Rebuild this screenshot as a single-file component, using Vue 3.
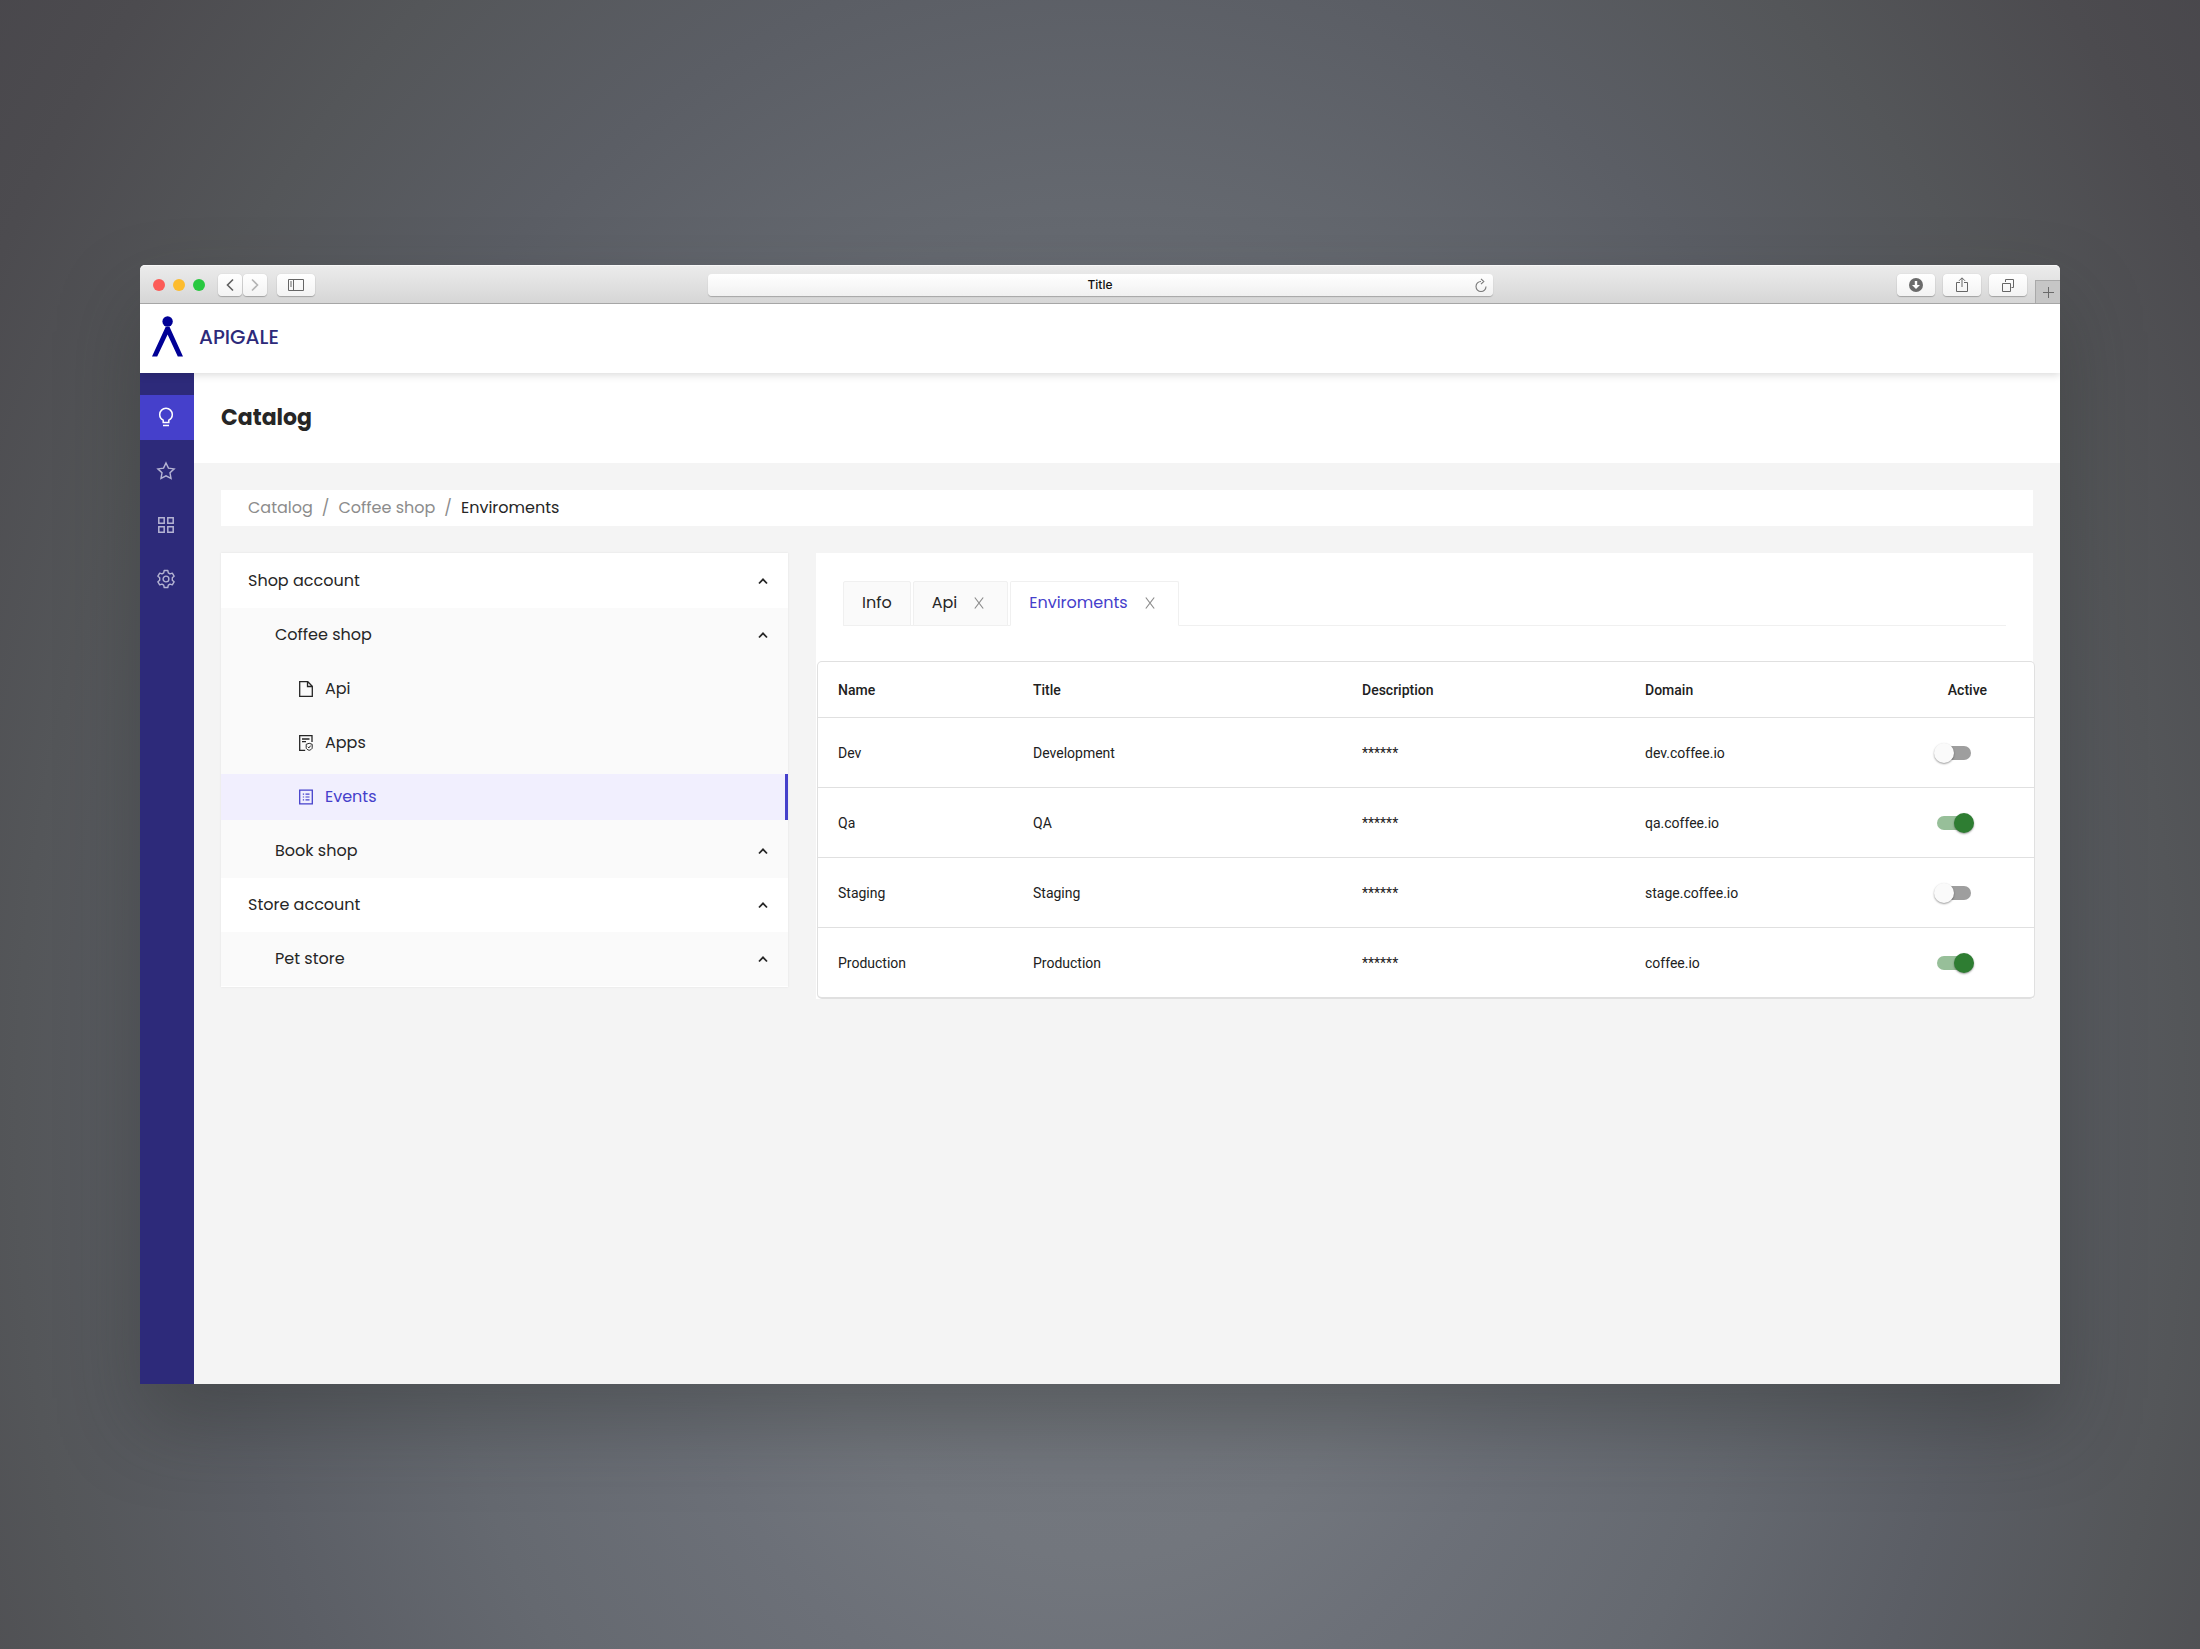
<script setup>
import { reactive, ref } from 'vue'

const rail = ['bulb', 'star', 'grid', 'gear']
const activeRail = ref('bulb')

const menu = [
  { label: 'Shop account', level: 1 },
  { label: 'Coffee shop', level: 2 },
  { label: 'Api', level: 3, icon: 'file' },
  { label: 'Apps', level: 3, icon: 'apps' },
  { label: 'Events', level: 3, icon: 'events' },
  { label: 'Book shop', level: 2 },
  { label: 'Store account', level: 1 },
  { label: 'Pet store', level: 2 },
]
const selected = ref('Events')

const tabs = [
  { label: 'Info', closable: false },
  { label: 'Api', closable: true },
  { label: 'Enviroments', closable: true },
]
const activeTab = ref('Enviroments')

const rows = reactive([
  { name: 'Dev', title: 'Development', domain: 'dev.coffee.io', active: false },
  { name: 'Qa', title: 'QA', domain: 'qa.coffee.io', active: true },
  { name: 'Staging', title: 'Staging', domain: 'stage.coffee.io', active: false },
  { name: 'Production', title: 'Production', domain: 'coffee.io', active: true },
])
const address = ref('Title')
</script>

<template>
  <div class="desktop">
    <div class="window">
      <div class="chrome">
        <div class="chrome-left">
          <div class="lights">
            <i class="light red"></i><i class="light yellow"></i><i class="light green"></i>
          </div>
          <div class="nav-pair">
            <button class="key narrow" aria-label="Back">
              <svg width="10" height="14" viewBox="0 0 10 14"><path d="M8 1.5 2.5 7 8 12.5" stroke="#5f5f5f" stroke-width="1.6" /></svg>
            </button>
            <button class="key narrow" aria-label="Forward">
              <svg width="10" height="14" viewBox="0 0 10 14"><path d="M2 1.5 7.5 7 2 12.5" stroke="#b4b4b4" stroke-width="1.6" /></svg>
            </button>
          </div>
          <button class="key" aria-label="Sidebar">
            <svg width="16" height="12" viewBox="0 0 16 12"><path d="M.5.5h15v11H.5zM5.500.5v11M2 3h2M2 5h2M2 7h2" stroke="#666" /></svg>
          </button>
        </div>
        <div class="address">
          <input v-model="address" type="text" aria-label="Address" />
          <button aria-label="Reload">
            <svg width="12" height="15" viewBox="0 0 12 15"><path d="M6 3.500A5 5 0 1 0 11 8.500M6 .8 8.800 3.500 6 6.200" stroke="#777" stroke-width="1.1" /></svg>
          </button>
        </div>
        <div class="chrome-right">
          <button class="key" aria-label="Downloads">
            <svg width="14" height="14" viewBox="0 0 14 14"><circle cx="7" cy="7" r="7" fill="#6b6b6b" /><path d="M5.800 3h2.400v4H11l-4 4-4-4h2.800z" fill="#fff" /></svg>
          </button>
          <button class="key" aria-label="Share">
            <svg width="12" height="16" viewBox="0 0 12 16"><path d="M4 5.500H.500v9h11v-9H8M6 10V1M3 3.800l3-3 3 3" stroke="#666" /></svg>
          </button>
          <button class="key" aria-label="Tabs">
            <svg width="12" height="13" viewBox="0 0 12 13"><path d="M.5 4.500h8v8h-8zM3.500 3V.5h8v8H9.500" stroke="#666" /></svg>
          </button>
          <button class="new-tab" aria-label="New tab">
            <svg width="11" height="11" viewBox="0 0 11 11"><path d="M5.500 0v11M0 5.500h11" stroke="#6a6a6a" /></svg>
          </button>
        </div>
      </div>

      <header class="brand">
        <svg width="32" height="41" viewBox="0 0 32 41">
          <circle cx="15.600" cy="5.500" r="5.200" fill="#000096" />
          <path d="M13.600 11h4L31 40.500h-5.200L15.600 18.500 5.200 40.500H0z" fill="#000096" />
        </svg>
        <span>APIGALE</span>
      </header>

      <div class="body">
        <nav class="rail">
          <button
            v-for="item in rail"
            :key="item"
            :class="{ on: item === activeRail }"
            :aria-label="item"
            @click="activeRail = item"
          >
            <svg v-if="item === 'bulb'" width="18" height="20" viewBox="0 0 18 20">
              <path d="M6.200 15.500v-2.300C3.800 12 2.700 10 2.700 7.600a6.300 6.300 0 0 1 12.600 0c0 2.400-1.100 4.400-3.500 5.600v2.300zM6 18.600h6" stroke="currentColor" stroke-width="1.500" />
            </svg>
            <svg v-else-if="item === 'star'" width="20" height="20" viewBox="0 0 18 18">
              <path d="m9 1.800 2.200 4.600 5.100.7-3.700 3.500.9 5.100L9 13.300l-4.500 2.400.9-5.100L1.700 7.100l5.100-.7z" stroke="currentColor" stroke-width="1.300" />
            </svg>
            <svg v-else-if="item === 'grid'" width="18" height="18" viewBox="0 0 18 18">
              <path d="M1.800 1.800h5.400v5.400H1.800zM10.800 1.800h5.400v5.400h-5.400zM1.800 10.800h5.400v5.400H1.800zM10.800 10.800h5.400v5.400h-5.400z" stroke="currentColor" stroke-width="1.500" />
            </svg>
            <svg v-else width="18" height="20" viewBox="0 0 18 20">
              <path d="M7.200 1.500h3.600l.5 2.400 1.700 1 2.300-.8 1.800 3.100-1.800 1.600v2.400l1.800 1.600-1.800 3.100-2.300-.8-1.700 1-.5 2.400H7.200l-.5-2.400-1.700-1-2.300.8-1.800-3.100 1.800-1.600V8.800L.9 7.200l1.800-3.100 2.300.8 1.700-1z" stroke="currentColor" stroke-width="1.400" stroke-linejoin="round" />
              <circle cx="9" cy="10" r="2.900" stroke="currentColor" stroke-width="1.400" />
            </svg>
          </button>
        </nav>

        <main>
          <div class="heading"><h1>Catalog</h1></div>
          <div class="content">
            <nav class="crumbs">
              <a href="#">Catalog</a><span>/</span><a href="#">Coffee shop</a><span>/</span><b>Enviroments</b>
            </nav>

            <div class="columns">
              <ul class="menu">
                <li v-for="item in menu" :key="item.label" :class="['level' + item.level, { selected: item.label === selected }]">
                  <button @click="item.level === 3 && (selected = item.label)">
                    <svg v-if="item.icon === 'file'" width="14" height="16" viewBox="0 0 14 16">
                      <path d="M.700.700h8.100l4.500 4.500v10.100H.700zM8.500.700v4.800h4.800" stroke="currentColor" stroke-width="1.300" />
                    </svg>
                    <svg v-else-if="item.icon === 'apps'" width="14" height="16" viewBox="0 0 14 16">
                      <path d="M13 7V.700H.700v14.600h5.500M3 4h7.500M3 6.700h4" stroke="currentColor" stroke-width="1.300" />
                      <path d="m10.200 8.300 3 1v3.500c0 1.300-1.500 2-3 2.500-1.500-.5-3-1.200-3-2.500V9.300zM8.800 11.800l1.100 1.100 1.800-2.300" stroke="currentColor" />
                    </svg>
                    <svg v-else-if="item.icon === 'events'" width="14" height="16" viewBox="0 0 14 16">
                      <path d="M.700 1.200h12.600v13.600H.700z" stroke="currentColor" stroke-width="1.300" />
                      <path d="M3.800 5.200h1.300M6.500 5.200h4M3.800 8h1.300M6.500 8h4M3.800 10.800h1.300M6.500 10.800h4" stroke="currentColor" stroke-width="1.200" />
                    </svg>
                    <span>{{ item.label }}</span>
                    <svg v-if="!item.icon" class="chevron" width="10" height="8" viewBox="0 0 10 8">
                      <path d="M1 6.500 5 2.300l4 4.200" stroke="currentColor" stroke-width="1.800" />
                    </svg>
                  </button>
                </li>
              </ul>

              <section class="panel">
                <div class="tabs">
                  <div v-for="tab in tabs" :key="tab.label" class="tab" :class="{ active: tab.label === activeTab }">
                    <button @click="activeTab = tab.label">{{ tab.label }}</button>
                    <button v-if="tab.closable" class="close" :aria-label="'Close ' + tab.label">
                      <svg width="10" height="12" viewBox="0 0 10 12"><path d="m.800.500 8.400 11M9.200.500.800 11.500" stroke="#8c8c8c" stroke-width="1.200" /></svg>
                    </button>
                  </div>
                </div>

                <div class="sheet">
                  <table>
                    <colgroup>
                      <col class="c-name" /><col class="c-title" /><col class="c-description" /><col />
                      <col class="c-active" />
                    </colgroup>
                    <thead>
                      <tr><th>Name</th><th>Title</th><th>Description</th><th>Domain</th><th>Active</th></tr>
                    </thead>
                    <tbody>
                      <tr v-for="row in rows" :key="row.name">
                        <td>{{ row.name }}</td>
                        <td>{{ row.title }}</td>
                        <td>******</td>
                        <td>{{ row.domain }}</td>
                        <td><input v-model="row.active" type="checkbox" role="switch" :aria-label="row.name + ' active'" /></td>
                      </tr>
                    </tbody>
                  </table>
                </div>
              </section>
            </div>
          </div>
        </main>
      </div>
    </div>
  </div>
</template>

<style>
body {
  margin: 0;
}
</style>

<style scoped>
* {
  box-sizing: border-box;
}
svg {
  display: block;
  flex: none;
  fill: none;
}
button {
  padding: 0;
  border: 0;
  background: none;
  color: inherit;
  font: inherit;
  cursor: pointer;
}
.desktop {
  display: flex;
  min-height: 100vh;
  padding: 265px 140px;
  background: radial-gradient(
    ellipse 60% 106% at 50% 68%,
    #777b82 0%,
    #72767d 25%,
    #6c7078 35%,
    #656970 51%,
    #5b5e65 67%,
    #545659 82%,
    #4c4b4f 97%,
    #47454a 112%
  );
  color: #262626;
  font: 16px/24px Poppins, Inter, sans-serif;
}
.window {
  display: flex;
  flex: 1;
  flex-direction: column;
  min-width: 0;
  border-radius: 5px 5px 0 0;
  box-shadow: 0 40px 80px rgba(40, 42, 40, 0.36);
}

/* browser chrome */
.chrome {
  display: grid;
  grid-template-columns: 1fr 785px 1fr;
  align-items: center;
  height: 39px;
  padding-top: 2px;
  border-bottom: 1px solid #a6a6a6;
  border-radius: 5px 5px 0 0;
  background: linear-gradient(#ececec, #d6d6d6);
  box-shadow: inset 0 1px #f7f7f7;
}
.chrome-left,
.chrome-right,
.lights,
.nav-pair {
  display: flex;
  align-items: center;
}
.chrome-left {
  gap: 10px;
  padding-left: 13px;
}
.lights {
  gap: 8px;
  margin-right: 3px;
}
.light {
  width: 12px;
  height: 12px;
  border-radius: 50%;
}
.red {
  background: #fc5b57;
}
.yellow {
  background: #fdbc2e;
}
.green {
  background: #28c840;
}
.nav-pair {
  gap: 1px;
}
.key {
  display: grid;
  place-items: center;
  width: 38px;
  height: 22px;
  border-radius: 4px;
  background: linear-gradient(#fff, #f3f3f3);
  box-shadow: 0 1px 1px rgba(0, 0, 0, 0.24), 0 0 1px rgba(0, 0, 0, 0.2);
}
.narrow {
  width: 24px;
}
.address {
  display: flex;
  align-items: center;
  height: 22px;
  padding: 0 6px 0 18px;
  border-radius: 4px;
  background: linear-gradient(#fff, #f1f1f1);
  box-shadow: 0 1px 1px rgba(0, 0, 0, 0.24);
}
.address input {
  flex: 1;
  min-width: 0;
  padding: 0;
  border: 0;
  outline: 0;
  background: none;
  color: #111;
  font: 500 12px/22px Inter, sans-serif;
  text-align: center;
}
.chrome-right {
  justify-content: flex-end;
  align-self: stretch;
  gap: 8px;
}
.new-tab {
  display: grid;
  place-items: center;
  align-self: flex-end;
  width: 25px;
  height: 23px;
  border: 1px solid #a9a9a9;
  border-width: 1px 0 0 1px;
  background: #c6c6c6;
}

/* app header */
.brand {
  position: relative;
  z-index: 1;
  display: flex;
  align-items: center;
  gap: 15px;
  height: 69px;
  padding: 0 12px 4px;
  background: #fff;
  box-shadow: 0 2px 8px rgba(0, 0, 0, 0.15);
  clip-path: inset(0 0 -12px 0);
  color: #2d2a7a;
  font-size: 20px;
  font-weight: 500;
}
.body {
  display: flex;
  flex: 1;
}
.rail {
  display: flex;
  flex-direction: column;
  gap: 9px;
  width: 54px;
  padding-top: 22px;
  background: #2d2a7a;
}
.rail button {
  display: grid;
  place-items: center;
  height: 45px;
  padding: 0 2px 2px 0;
  color: #b5b4d3;
}
.rail .on {
  background: #4540cb;
  color: #fff;
}
main {
  flex: 1;
  min-width: 0;
  background: #f4f4f4;
}
.heading {
  display: flex;
  align-items: center;
  height: 90px;
  padding: 0 27px;
  background: #fff;
}
h1 {
  margin: 0;
  font-size: 22px;
  line-height: 32px;
}
.content {
  display: grid;
  gap: 27px;
  padding: 27px;
}
.crumbs {
  display: flex;
  align-items: center;
  gap: 9px;
  height: 36px;
  padding: 0 27px;
  background: #fff;
  color: #8c8c8c;
}
.crumbs a {
  color: inherit;
  text-decoration: none;
}
.crumbs b {
  color: #262626;
  font-weight: 400;
}
.columns {
  display: flex;
  align-items: flex-start;
  gap: 28px;
}

/* account tree */
.menu {
  flex: 0 0 567px;
  margin: 0;
  padding: 1px 0;
  background: #fff;
  box-shadow: 0 0 2px rgba(0, 0, 0, 0.08);
  list-style: none;
}
.menu button {
  display: flex;
  align-items: center;
  gap: 12px;
  width: 100%;
  height: 46px;
  padding: 0 20px 0 27px;
}
.menu li {
  padding: 4px 0;
}
.chevron {
  margin-left: auto;
}
.level2,
.level3 {
  background: #fafafa;
}
.menu .level2 button {
  padding-left: 54px;
}
.menu .level3 button {
  padding-left: 78px;
}
.selected button {
  border-right: 3px solid #4540cb;
  background: #f1effe;
  color: #4540cb;
}

/* environments */
.panel {
  flex: 1;
  min-width: 0;
  background: #fff;
}
.tabs {
  display: flex;
  gap: 2px;
  height: 45px;
  margin: 28px 27px 35px;
  border-bottom: 1px solid #f0f0f0;
}
.tab {
  display: flex;
  align-items: center;
  gap: 17px;
  height: 45px;
  padding: 0 18px 1px;
  border: 1px solid #f0f0f0;
  border-radius: 2px 2px 0 0;
  background: #fafafa;
}
.tab.active {
  border-bottom-color: #fff;
  background: #fff;
  color: #4540cb;
}
.close {
  margin-right: 5px;
}
.sheet {
  margin: 0 -2px 0 1px;
  border: 1px solid #e0e0e0;
  border-bottom-width: 2px;
  border-radius: 5px;
  background: #fff;
}
table {
  width: 100%;
  border-spacing: 0;
  table-layout: fixed;
  color: #212121;
  font: 14px/20px Roboto, sans-serif;
}
.c-name {
  width: 195px;
}
.c-title {
  width: 329px;
}
.c-description {
  width: 283px;
}
.c-active {
  width: 146px;
}
th,
td {
  height: 70px;
  padding: 0 20px;
  border-bottom: 1px solid #e0e0e0;
  text-align: left;
}
th {
  height: 56px;
  font-weight: 500;
}
tbody tr:last-child td {
  height: 69px;
  border-bottom: 0;
}
th:last-child {
  padding-right: 47px;
  text-align: right;
}
td:last-child {
  padding-right: 63px;
}
td input {
  position: relative;
  display: block;
  width: 34px;
  height: 14px;
  margin: 0 0 0 auto;
  border-radius: 7px;
  appearance: none;
  background: #9e9e9e;
  cursor: pointer;
}
td input::before {
  position: absolute;
  top: -3px;
  left: -3px;
  width: 20px;
  height: 20px;
  border-radius: 50%;
  background: #fafafa;
  box-shadow: 0 1px 2px rgba(0, 0, 0, 0.4);
  content: '';
}
td input:checked {
  background: #97bf99;
}
td input:checked::before {
  left: 17px;
  background: #2e7d32;
}
</style>
